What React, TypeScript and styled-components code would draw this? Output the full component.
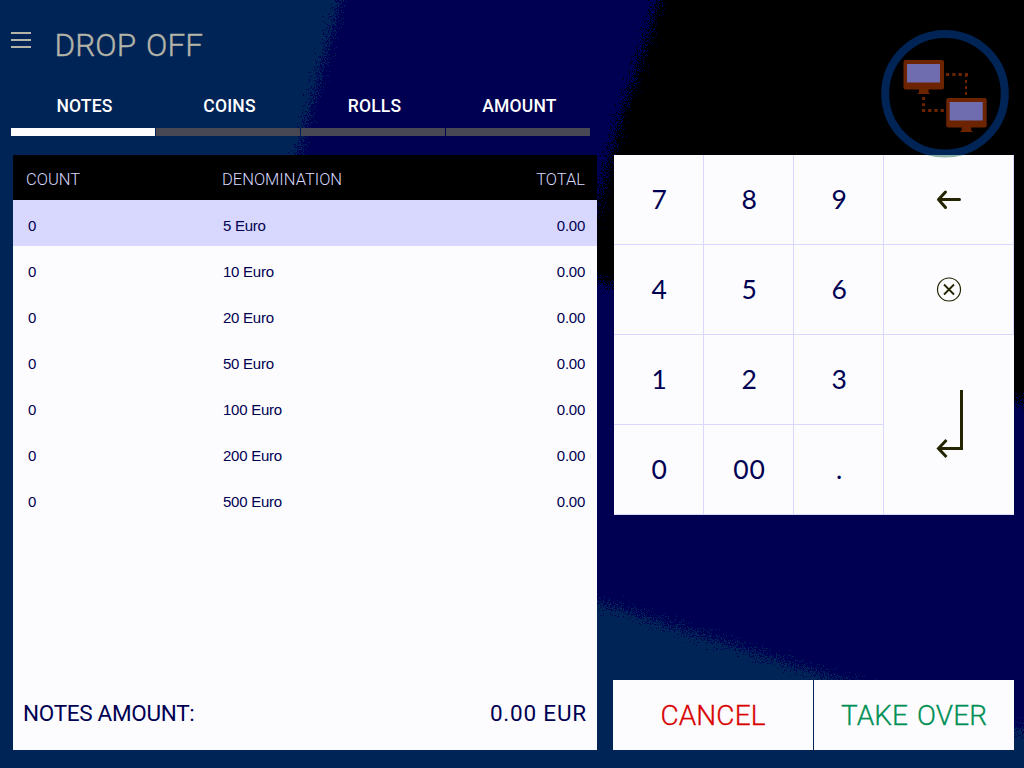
import React from "react";
import styled, { createGlobalStyle } from "styled-components";

const colors = {
  teal: "#002456",
  navy: "#000052",
  paper: "#fcfcff",
  lilac: "#d8d8ff",
  track: "#484854",
  sand: "#b4b4a8",
  olive: "#242400",
  rust: "#6c2400",
};

const GlobalStyle = createGlobalStyle`
  * { box-sizing: border-box; }
  body { margin: 0; background: ${colors.teal}; }
  button { font: inherit; border: 0; padding: 0; background: none; }
`;

const Screen = styled.div`
  position: relative;
  width: 1024px;
  height: 768px;
  overflow: hidden;
  font-family: Roboto, "Liberation Sans", sans-serif;
  color: ${colors.navy};
`;

const Backdrop = styled.svg`
  position: absolute;
  inset: 0;
`;

const Layout = styled.div`
  position: relative;
  display: grid;
  grid-template-columns: 597px 401px;
  column-gap: 16px;
  height: 750px;
`;

const LeftColumn = styled.div`
  display: flex;
  flex-direction: column;
  padding-left: 11px;
`;

const RightColumn = styled.div`
  display: flex;
  flex-direction: column;
  justify-content: space-between;
  padding-top: 155px;
`;

const Header = styled.header`
  display: flex;
  height: 84px;
  padding-top: 26px;
`;

const MenuButton = styled.button`
  display: flex;
  flex-direction: column;
  gap: 5px;
  width: 20px;
  height: 28px;
  padding-top: 6px;
`;

const MenuBar = styled.span`
  height: 2px;
  background: ${colors.sand};
`;

const Title = styled.h1`
  margin: 0 0 0 23.5px;
  font-size: 31.5px;
  font-weight: 300;
  line-height: 40px;
  letter-spacing: 0.1px;
  word-spacing: 2px;
  -webkit-text-stroke: 0.4px;
  color: ${colors.sand};
`;

const Tabs = styled.nav`
  display: grid;
  grid-template-columns: repeat(4, 144px);
  column-gap: 1px;
  height: 52px;
`;

const Tab = styled.button<{ $active?: boolean }>`
  height: 52px;
  padding: 0 0 1px 3px;
  border-bottom: 8px solid ${(p) => (p.$active ? colors.paper : colors.track)};
  font-size: 17.5px;
  font-weight: 500;
  letter-spacing: 0.2px;
  color: #fff;
`;

const Panel = styled.section`
  display: flex;
  flex-direction: column;
  flex: 1;
  margin: 19px 0 0 2px;
  background: ${colors.paper};
`;

const Row = styled.div<{ $selected?: boolean }>`
  display: grid;
  grid-template-columns: 195px 1fr auto;
  align-items: center;
  height: 46px;
  padding: 4px 12px 0 15px;
  font: 15px "Liberation Sans", Arial, sans-serif;
  letter-spacing: -0.25px;
  background: ${(p) => (p.$selected ? colors.lilac : "transparent")};
`;

const HeadRow = styled(Row)`
  height: 45px;
  padding: 3px 12px 0 13px;
  grid-template-columns: 196px 1fr auto;
  font: 300 16.5px Roboto, sans-serif;
  letter-spacing: 0;
  color: ${colors.lilac};
  background: #000;
`;

const Summary = styled.div`
  display: flex;
  justify-content: space-between;
  align-items: center;
  height: 70px;
  margin-top: auto;
  padding: 0 10px 4px 10px;
  font-size: 22.5px;
`;

const SummaryLabel = styled.span`
  letter-spacing: -0.3px;
`;

const SummaryValue = styled.span`
  letter-spacing: 0.8px;
`;

const Keypad = styled.div`
  display: grid;
  grid-template-columns: 90px 90px 90px 130px;
  grid-template-rows: repeat(4, 90px);
  margin-left: 1px;
  width: 400px;
  background: ${colors.paper};
`;

const Key = styled.button<{ $tall?: boolean }>`
  display: flex;
  align-items: center;
  justify-content: center;
  grid-row: ${(p) => (p.$tall ? "span 2" : "auto")};
  border-right: ${(p) => (p.$tall ? "0" : `1px solid ${colors.lilac}`)};
  border-bottom: 1px solid ${colors.lilac};
  font: 26.5px Lato, sans-serif;
  letter-spacing: 0.8px;
  color: ${colors.navy};
`;

const Digit = styled.span`
  padding: 0 0 2px 2px;
`;

const Actions = styled.div`
  display: grid;
  grid-template-columns: 200px 200px;
  column-gap: 1px;
  height: 70px;
`;

const Action = styled.button<{ $tone: string }>`
  background: ${colors.paper};
  color: ${(p) => p.$tone};
  font-size: 28px;
  font-weight: 300;
  word-spacing: 2px;
  letter-spacing: 0.1px;
  -webkit-text-stroke: 0.3px;
`;

const Emblem = styled.svg`
  position: absolute;
  left: 880px;
  top: 29px;
`;

const ArrowIcon = () => (
  <svg width="26" height="22" fill="none" stroke={colors.olive} strokeWidth="3" strokeLinecap="round" strokeLinejoin="round">
    <path d="M23.5 10.5H3M9.5 3L2.5 10.5L9.5 18.5" />
  </svg>
);

const ClearIcon = () => (
  <svg width="26" height="26" fill="none" stroke={colors.olive}>
    <circle cx="13" cy="12.5" r="11.5" strokeWidth="1.2" />
    <path d="M8 7.5L18 17.5M18 7.5L8 17.5" strokeWidth="1.8" />
  </svg>
);

const EnterIcon = () => (
  <svg width="28" height="70" fill="none" stroke={colors.olive} strokeWidth="3">
    <path d="M26.5 0V58.5H4M11.5 50L3.5 58.5L11.5 67" />
  </svg>
);

const Monitor = ({ x, y }: { x: number; y: number }) => (
  <g transform={`translate(${x} ${y})`}>
    <rect width="40.5" height="29.5" rx="2" fill={colors.rust} />
    <rect x="3.5" y="4" width="33" height="18.5" fill="#706cb0" />
    <path d="M15.5 29H25V32.5L27 34H13.5L15.5 32.5Z" fill={colors.rust} />
  </g>
);

const NetworkEmblem = () => (
  <Emblem width="130" height="130" viewBox="880 29 130 130">
    <defs>
      <clipPath id="aboveKeys"><rect x="880" y="29" width="130" height="126" /></clipPath>
      <clipPath id="overKeys"><rect x="880" y="155" width="130" height="4" /></clipPath>
    </defs>
    <circle cx="945" cy="93.7" r="59.8" fill="none" stroke={colors.teal} strokeWidth="8" clipPath="url(#aboveKeys)" />
    <circle cx="945" cy="93.7" r="59.8" fill="none" stroke="#90b4a8" strokeWidth="8" clipPath="url(#overKeys)" />
    <g fill="none" stroke={colors.rust}>
      <path d="M946 74.5H968" strokeWidth="3" strokeDasharray="3.2 3.1" />
      <path d="M966 74V98" strokeWidth="2" strokeDasharray="3 3" />
      <path d="M923.5 97V112" strokeWidth="3" strokeDasharray="3 3.2" />
      <path d="M922 110.5H946" strokeWidth="3" strokeDasharray="3.2 3" />
    </g>
    <Monitor x={903.5} y={60} />
    <Monitor x={946.2} y={98} />
  </Emblem>
);

const Scenery = () => (
  <Backdrop width="1024" height="768">
    <defs>
      <filter id="grain" filterUnits="userSpaceOnUse" x="0" y="0" width="1024" height="768" colorInterpolationFilters="sRGB">
        <feTurbulence type="fractalNoise" baseFrequency="0.85" numOctaves="1" seed="4" result="noise" />
        <feDisplacementMap in="SourceGraphic" in2="noise" scale="50" xChannelSelector="R" yChannelSelector="G" />
      </filter>
    </defs>
    <rect width="1024" height="768" fill={colors.teal} />
    <g filter="url(#grain)" shapeRendering="crispEdges">
      <path d="M351 -40L299 150L200 480L597 602L840 680L1060 740V-40Z" fill={colors.navy} />
      <path d="M671 -40L614 140L594 215L560 270L1060 414V-40Z" fill="#000" />
    </g>
  </Backdrop>
);

const tabs = ["NOTES", "COINS", "ROLLS", "AMOUNT"];
const denominations = [5, 10, 20, 50, 100, 200, 500];
const keys: { id: string; face: React.ReactNode; tall?: boolean }[] = [
  { id: "7", face: <Digit>7</Digit> },
  { id: "8", face: <Digit>8</Digit> },
  { id: "9", face: <Digit>9</Digit> },
  { id: "back", face: <ArrowIcon /> },
  { id: "4", face: <Digit>4</Digit> },
  { id: "5", face: <Digit>5</Digit> },
  { id: "6", face: <Digit>6</Digit> },
  { id: "clear", face: <ClearIcon /> },
  { id: "1", face: <Digit>1</Digit> },
  { id: "2", face: <Digit>2</Digit> },
  { id: "3", face: <Digit>3</Digit> },
  { id: "enter", face: <EnterIcon />, tall: true },
  { id: "0", face: <Digit>0</Digit> },
  { id: "00", face: <Digit>00</Digit> },
  { id: "dot", face: <Digit>.</Digit> },
];

export default function App() {
  return (
    <Screen>
      <GlobalStyle />
      <Scenery />
      <Layout>
        <LeftColumn>
          <Header>
            <MenuButton>
              <MenuBar />
              <MenuBar />
              <MenuBar />
            </MenuButton>
            <Title>DROP OFF</Title>
          </Header>
          <Tabs>
            {tabs.map((label, i) => (
              <Tab key={label} $active={i === 0}>{label}</Tab>
            ))}
          </Tabs>
          <Panel>
            <HeadRow>
              <span>COUNT</span>
              <span>DENOMINATION</span>
              <span>TOTAL</span>
            </HeadRow>
            {denominations.map((value, i) => (
              <Row key={value} $selected={i === 0}>
                <span>0</span>
                <span>{value} Euro</span>
                <span>0.00</span>
              </Row>
            ))}
            <Summary>
              <SummaryLabel>NOTES AMOUNT:</SummaryLabel>
              <SummaryValue>0.00 EUR</SummaryValue>
            </Summary>
          </Panel>
        </LeftColumn>
        <RightColumn>
          <Keypad>
            {keys.map((k) => (
              <Key key={k.id} $tall={k.tall}>{k.face}</Key>
            ))}
          </Keypad>
          <Actions>
            <Action $tone="#d80000">CANCEL</Action>
            <Action $tone="#009054">TAKE OVER</Action>
          </Actions>
        </RightColumn>
      </Layout>
      <NetworkEmblem />
    </Screen>
  );
}
